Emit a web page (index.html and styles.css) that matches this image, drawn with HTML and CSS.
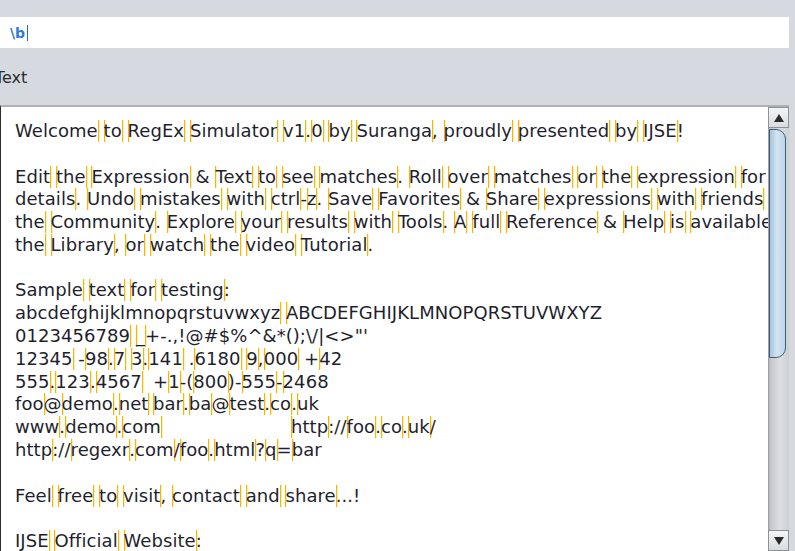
FILE: index.html
```html
<!DOCTYPE html>
<html>
<head>
<meta charset="utf-8">
<link rel="stylesheet" href="styles.css">
</head>
<body>
<div class="app">
  <div class="topgap"></div>
  <div class="expr"><span class="expr-text">\b</span><span class="caret"></span></div>
  <div class="label">Text</div>
  <div class="panel">
    <div class="viewport"><pre class="txt">Welcome to RegEx Simulator v1.0 by Suranga, proudly presented by IJSE!

Edit the Expression &amp; Text to see matches. Roll over matches or the expression for
details. Undo mistakes with ctrl-z. Save Favorites &amp; Share expressions with friends or
the Community. Explore your results with Tools. A full Reference &amp; Help is available in
the Library, or watch the video Tutorial.

Sample text for testing:
abcdefghijklmnopqrstuvwxyz ABCDEFGHIJKLMNOPQRSTUVWXYZ
0123456789 _+-.,!@#$%^&amp;*();\/|&lt;&gt;"'
12345 -98.7 3.141 .6180 9,000 +42
555.123.4567	+1-(800)-555-2468
foo@demo.net	bar.ba@test.co.uk
www.demo.com	http://foo.co.uk/
http://regexr.com/foo.html?q=bar

Feel free to visit, contact and share...!

IJSE Official Website:
www.ijse.lk</pre></div>
    <div class="scrollbar">
      <div class="sb-btn sb-up"><span class="tri-up"></span></div>
      <div class="sb-track">
        <div class="sb-thumb"></div>
      </div>
      <div class="sb-btn sb-down"><span class="tri-down"></span></div>
    </div>
  </div>
</div>
<script src="script.js"></script>
</body>
</html>
```
FILE: styles.css
```css
html, body {
  margin: 0;
  padding: 0;
}
body {
  width: 795px;
  height: 551px;
  overflow: hidden;
  background: #d6d9df;
  font-family: "DejaVu Sans", sans-serif;
}
.app {
  display: flex;
  flex-direction: column;
  height: 551px;
}
.topgap {
  height: 17px;
  flex: none;
}
.expr {
  flex: none;
  height: 31px;
  width: 779px;
  margin-right: 6px;
  padding-left: 10px;
  background: #ffffff;
  display: flex;
  align-items: center;
}
.expr-text {
  font-family: "DejaVu Sans", sans-serif;
  font-weight: bold;
  font-size: 14px;
  color: #2f7bd6;
}
.caret {
  width: 1px;
  height: 16px;
  margin-left: 2px;
  background: #2a6cc4;
}
.label {
  flex: none;
  height: 57px;
  margin-left: -5px;
  font-size: 16px;
  line-height: 59px;
  color: #2a2a2a;
}
.panel {
  flex: 1;
  min-height: 0;
  width: 788px;
  display: flex;
  border-top: 2px solid #aeb0b4;
  border-left: 1px solid #2c2c2c;
  background: #ffffff;
}
.viewport {
  flex: 1;
  min-width: 0;
  overflow: hidden;
}
.txt {
  margin: 0;
  padding: 13px 0 0 14px;
  font-family: "DejaVu Sans", sans-serif;
  font-size: 18px;
  line-height: 22.78px;
  letter-spacing: 0.06px;
  color: #1f1f2e;
  white-space: pre;
  tab-size: 138px;
}
.b {
  display: inline-block;
  width: 1px;
  height: 22px;
  margin-right: -1px;
  vertical-align: top;
  letter-spacing: 0;
  background: #f5b800;
  box-shadow: 1px 0 0 rgba(250, 205, 60, 0.35);
}
.scrollbar {
  flex: none;
  width: 21px;
  display: flex;
  flex-direction: column;
  background: linear-gradient(90deg, #8f9297 0, #c3c5c9 2px, #dcdee2 55%, #cdd0d4 100%);
}
.sb-btn {
  flex: none;
  height: 21px;
  box-sizing: border-box;
  border: 1px solid #8e9196;
  background: linear-gradient(180deg, #f4f5f6, #d9dbde);
  display: flex;
  align-items: center;
  justify-content: center;
}
.tri-up {
  width: 0;
  height: 0;
  border-left: 5px solid transparent;
  border-right: 5px solid transparent;
  border-bottom: 8px solid #2b2b2b;
}
.tri-down {
  width: 0;
  height: 0;
  border-left: 5px solid transparent;
  border-right: 5px solid transparent;
  border-top: 8px solid #2b2b2b;
}
.sb-track {
  flex: 1;
  min-height: 0;
  padding-left: 1px;
}
.sb-thumb {
  width: 15px;
  height: 227px;
  margin-top: 1px;
  border: 1.5px solid #3f5d78;
  border-left-width: 1px;
  border-radius: 0 10px 10px 0;
  background: linear-gradient(90deg, #a7c2da 0, #d3e4f2 45%, #bfd5e8 100%);
}
```
FILE: script.js
```js
(function () {
  var el = document.querySelector('.txt');
  var t = el.textContent;
  var isW = function (c) { return /\w/.test(c); };
  var esc = function (c) {
    if (c === '&') return '&amp;';
    if (c === '<') return '&lt;';
    if (c === '>') return '&gt;';
    return c;
  };
  var html = '';
  for (var i = 0; i < t.length; i++) {
    var prev = i > 0 ? t[i - 1] : '\n';
    var cur = t[i];
    if (prev !== '\n' && cur !== '\n' && isW(prev) !== isW(cur)) {
      html += '<span class="b"></span>';
    }
    html += esc(cur);
  }
  el.innerHTML = html;
})();
```
